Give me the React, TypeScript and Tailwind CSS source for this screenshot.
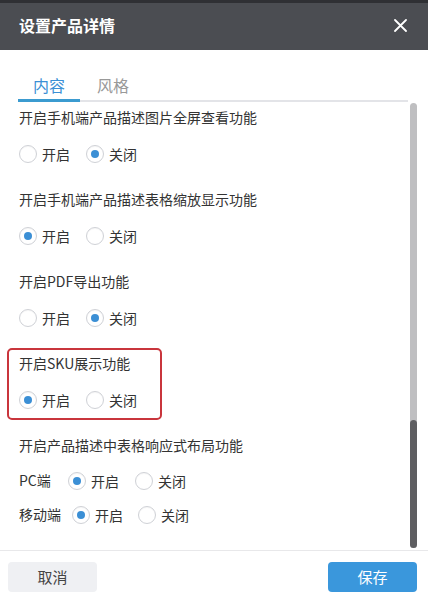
import React from "react";

const font = { fontFamily: '"Noto Sans CJK SC", "Noto Sans", sans-serif' };

function Radio({ checked, label, gap = "mr-[14px]" }: { checked: boolean; label: string; gap?: string }) {
  return (
    <div className={`flex items-center h-[20px] ${gap}`}>
      <span className="w-[18px] h-[18px] rounded-full border border-[#cfd1d6] bg-white flex items-center justify-center shadow-[inset_0_1px_1px_rgba(0,0,0,0.04)]">
        {checked && <span className="w-[8px] h-[8px] rounded-full bg-[#3b8fd5]" />}
      </span>
      <span className="ml-[5px] text-[14px] leading-[20px] text-[#333]">{label}</span>
    </div>
  );
}

function Section({ label, on, highlight }: { label: string; on: boolean; highlight?: boolean }) {
  return (
    <div
      className={`ml-[7px] w-[155px] border-2 rounded-[5px] pl-[10px] pt-[3px] pb-[8px] ${
        highlight ? "border-[#c9353c]" : "border-transparent"
      }`}
    >
      <div className="text-[14px] leading-[20px] text-[#333] whitespace-nowrap">{label}</div>
      <div className="flex mt-[17px]">
        <Radio checked={on} label="开启" gap="mr-[16px]" />
        <Radio checked={!on} label="关闭" />
      </div>
    </div>
  );
}

export default function App() {
  return (
    <div className="w-[428px] h-[600px] bg-white flex flex-col overflow-hidden" style={font}>
      {/* header */}
      <div className="h-[50px] bg-[#4b4d52] flex flex-col shrink-0">
        <div className="h-[3px] bg-[#2f3034]" />
        <div className="flex-1 flex items-center justify-between pl-[19px] pr-[21px] -mt-[3px]">
          <span className="text-white text-[16px] font-bold leading-[22px]">设置产品详情</span>
          <svg width="13" height="13" viewBox="0 0 13 13">
            <path d="M1 1L12 12M12 1L1 12" stroke="#fff" strokeWidth="1.8" strokeLinecap="round" />
          </svg>
        </div>
      </div>

      {/* tabs */}
      <div className="mt-[24px] ml-[18px] w-[390px] flex border-b-2 border-[#e3e4e8] shrink-0">
        <div className="w-[62px] text-center text-[16px] leading-[22px] pb-[3px] text-[#3b8fd5] border-b-[3px] border-[#3b9bd0] -mb-[2px]">
          内容
        </div>
        <div className="w-[66px] text-center text-[16px] leading-[22px] pb-[3px] text-[#999]">风格</div>
      </div>

      {/* scroll area */}
      <div className="flex h-[448px] shrink-0">
        <div className="flex-1 overflow-hidden flex flex-col gap-[10px]">
          <Section label="开启手机端产品描述图片全屏查看功能" on={false} />
          <Section label="开启手机端产品描述表格缩放显示功能" on={true} />
          <Section label="开启PDF导出功能" on={false} />
          <Section label="开启SKU展示功能" on={true} highlight />
          <div className="ml-[19px] pt-[5px]">
            <div className="text-[14px] leading-[20px] text-[#333] whitespace-nowrap">开启产品描述中表格响应式布局功能</div>
            <div className="flex items-center mt-[16px]">
              <span className="w-[49px] text-[14px] leading-[20px] text-[#333] -mt-[3px]">PC端</span>
              <Radio checked={true} label="开启" gap="mr-[16px]" />
              <Radio checked={false} label="关闭" />
            </div>
            <div className="flex items-center mt-[14px]">
              <span className="w-[53px] text-[14px] leading-[20px] text-[#333] -mt-[3px]">移动端</span>
              <Radio checked={true} label="开启" gap="mr-[15px]" />
              <Radio checked={false} label="关闭" />
            </div>
          </div>
        </div>
        <div className="w-[7px] mr-[11px] mt-[1px] mb-[2px] rounded-full bg-[#bfbfc1] flex flex-col justify-end">
          <div className="h-[128px] rounded-full bg-[#5e5e61]" />
        </div>
      </div>

      {/* footer */}
      <div className="border-t border-[#e8e8ea] flex justify-between px-[8px] pt-[11px] pr-[11px]">
        <button className="w-[89px] h-[30px] rounded-[4px] bg-[#eff0f3] text-[15px] text-[#444]">取消</button>
        <button className="w-[89px] h-[30px] rounded-[4px] bg-[#3a97dc] text-[15px] text-white">保存</button>
      </div>
    </div>
  );
}
